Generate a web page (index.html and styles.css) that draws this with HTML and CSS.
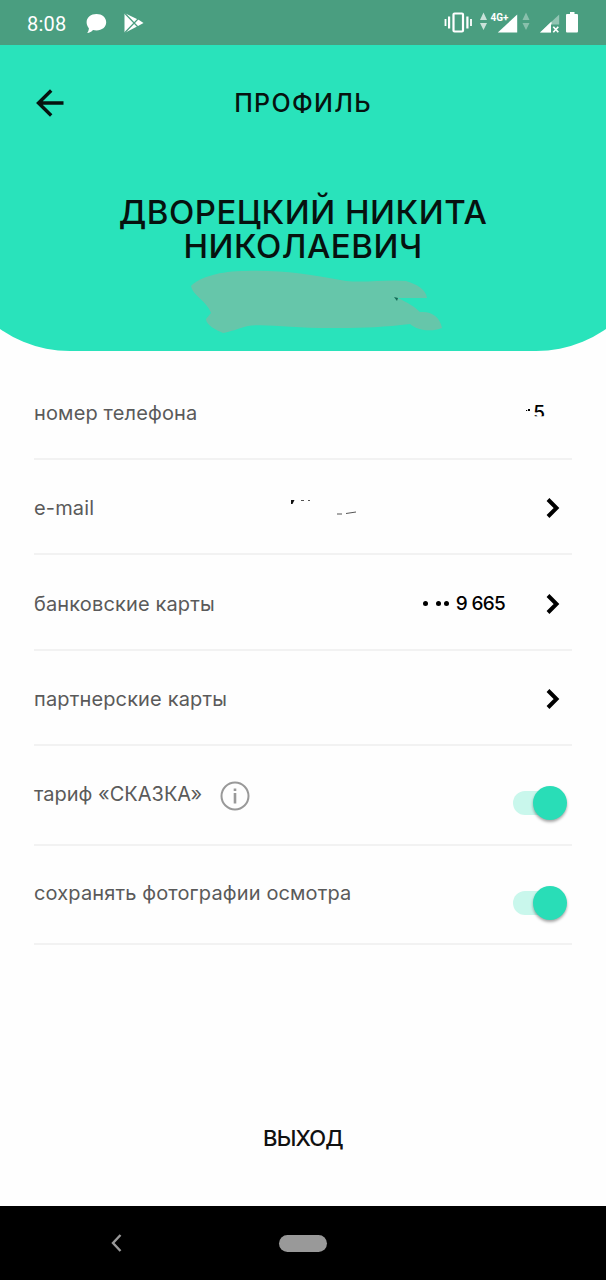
FILE: index.html
```
<!DOCTYPE html>
<html lang="ru">
<head>
  <meta charset="UTF-8" />
  <meta name="viewport" content="width=device-width, initial-scale=1.0" />
  <title>Профиль</title>
  <link rel="stylesheet" href="styles.css">
</head>
<body>

  <div class="status-bar">
    <span class="time">8:08</span>
    <svg class="notifications" width="60" height="24" viewBox="0 0 60 24" fill="#fff">
      <path d="M10.500 2C16 2 20.200 5.500 20.200 10.300S16 18.500 10.500 18.500c-1.300 0-2.500-.2-3.500-.5-1.500 1.700-3.300 2.700-5.800 3 1-1.300 1.500-2.800 1.700-4.800C1.600 14.600.6 12.600.6 10.300.6 5.500 5 2 10.500 2z"/>
      <path d="M38.500 1v20l14.500-7.500 4.500-2.500-4.500-3z"/>
      <path d="M38 .5l14 14.500M38 21.500L52 7" stroke="#4a9e80" stroke-width="1.200"/>
    </svg>
    <svg class="system" width="140" height="26" viewBox="0 0 140 26" fill="#fff">
      <rect x="9.500" y="3.500" width="9.500" height="18" rx="1" fill="none" stroke="#fff" stroke-width="2.200"/>
      <path d="M.6 9h1.800v7H.6zM4 6.500h2.200v12H4zM22.300 6.500h2.200v12h-2.200zM26.100 9h1.800v7h-1.800z"/>
      <path d="M36 10l3.500-7.500L43 10zM36 13h7l-3.500 7z" opacity=".7"/>
      <path d="M53.800 22.500L73.200 4.500v18z"/>
      <path d="M78.500 10L82 2.500 85.500 10zM78.500 13h7L82 20z" opacity=".35"/>
      <path d="M96 22.500l19.200-18v18z" opacity=".4"/>
      <path d="M96 22.500l11.500-11v11z"/>
      <path d="M107 14.500h9v8.500h-9z" fill="#4a9e80"/>
      <path d="M109.300 16.800l5 5.500m0-5.500l-5 5.500" stroke="#fff" stroke-width="1.700"/>
      <path d="M126 2h4.500v2h2.200c.8 0 1.300.5 1.300 1.300v15.900c0 .8-.5 1.300-1.300 1.300h-9.400c-.8 0-1.300-.5-1.300-1.300V5.300c0-.8.5-1.300 1.300-1.300h2.700z"/>
      <text class="network" x="46.500" y="10.500" textLength="18" lengthAdjust="spacingAndGlyphs">4G+</text>
    </svg>
  </div>

  <div class="header">
    <div class="top-row">
      <svg class="back" width="28" height="28" viewBox="0 0 28 28" fill="none" stroke="#06120f" stroke-width="3.400">
        <path d="M27.500 14H2.500M15.200 1.500L2.500 14l12.700 12.500"/>
      </svg>
      <h1>ПРОФИЛЬ</h1>
    </div>
    <h2>ДВОРЕЦКИЙ НИКИТА<br>НИКОЛАЕВИЧ</h2>
    <svg class="smudge" width="256" height="64" viewBox="0 0 256 64">
      <path d="M1 16C10 7 30 1 56 1c36-1 62 3 100 10 20 2 42-2 60 0 10 3 20 8 21 17h-29c10 5 16 8 22 14 12-1 20 5 22 16-10 4-24 3-32-4-25 3-45 4-70 4-42 1-75-5-92-2-8 2-18 6-25 7-7-3-17-8-17-14l5-6C17 31 3 26 1 16z" fill="#66c6aa"/>
      <path d="M204 27l4 1-1 3z" fill="#126a55"/>
    </svg>
  </div>

  <div class="settings">
    <div class="row">
      <span class="label">номер телефона</span>
      <svg class="speck" width="4" height="2" viewBox="0 0 4 2"><path d="M0 1h1.200v1H0zM2 0h2v2H2z"/></svg>
      <span class="value cut">5</span>
    </div>
    <div class="row">
      <span class="label email">e-mail</span>
      <svg class="scraps" width="80" height="18" viewBox="0 0 80 18">
        <path d="M0 1h3.500L1.500 5H0z" fill="#111"/>
        <path d="M10 1.500h3M17 1.500h2M46 15h5M55 14.500l10-1.500" stroke="#555" fill="none"/>
      </svg>
      <svg class="arrow" width="14" height="20" viewBox="0 0 14 20"><path d="M2 1.500l8.500 8.500L2 18.500"/></svg>
    </div>
    <div class="row">
      <span class="label">банковские карты</span>
      <span class="value card"><i></i><i></i><i></i><b>9 665</b></span>
      <svg class="arrow" width="14" height="20" viewBox="0 0 14 20"><path d="M2 1.500l8.500 8.500L2 18.500"/></svg>
    </div>
    <div class="row">
      <span class="label">партнерские карты</span>
      <svg class="arrow" width="14" height="20" viewBox="0 0 14 20"><path d="M2 1.500l8.500 8.500L2 18.500"/></svg>
    </div>
    <div class="row toggle-row">
      <span class="label tariff">тариф «СКАЗКА»</span>
      <svg class="info" width="30" height="30" viewBox="0 0 30 30">
        <circle cx="15" cy="15" r="13.500" fill="none" stroke="#999" stroke-width="2"/>
        <path d="M13.700 7.500h2.600V10h-2.600zM13.700 12h2.600v10.500h-2.600z" fill="#999"/>
      </svg>
      <span class="switch"></span>
    </div>
    <div class="row toggle-row">
      <span class="label">сохранять фотографии осмотра</span>
      <span class="switch"></span>
    </div>
  </div>

  <div class="logout">ВЫХОД</div>

  <div class="nav-bar">
    <svg class="nav-back" width="12" height="18" viewBox="0 0 12 18"><path d="M10.500 1L3 9l7.500 8" fill="none" stroke="#999" stroke-width="2.400"/></svg>
    <span class="home"></span>
  </div>

</body>
</html>
```

FILE: styles.css
```
* {
  box-sizing: border-box;
}

body {
  margin: 0;
  height: 1280px;
  display: flex;
  flex-direction: column;
  overflow: hidden;
  background: #fefefe;
  font-family: Inter, "Open Sans", sans-serif;
  color: #06120f;
}

svg {
  display: block;
  flex: none;
}

.status-bar {
  height: 45px;
  display: flex;
  align-items: center;
  padding: 0 22px 0 27px;
  background: #4a9e80;
}

.time {
  width: 59px;
  font-family: Roboto, sans-serif;
  font-size: 20px;
  line-height: 24px;
  letter-spacing: 0.2px;
  color: #fff;
  margin-top: 3px;
}

.notifications {
  margin-top: 2px;
}

.system {
  margin-left: auto;
}

.network {
  font: bold 11px Roboto, sans-serif;
}

/* the round corners start outside the screen, so its edges cut them */
.header {
  height: 306px;
  background: #29e3bb;
  clip-path: inset(0 -52px round 0 0 122px 122px);
}

.top-row {
  height: 115px;
  display: grid;
  grid-template-columns: 100px 1fr 100px;
  align-items: center;
}

.back {
  margin-left: 36px;
}

h1 {
  margin: 0;
  font-size: 25px;
  font-weight: 550;
  letter-spacing: 1.3px;
  text-align: center;
}

h2 {
  margin: 35px 0 0;
  font-size: 33px;
  line-height: 34px;
  font-weight: 550;
  letter-spacing: 0.5px;
  text-align: center;
  white-space: nowrap;
}

.smudge {
  margin: 7px 0 0 190px;
}

.settings {
  margin: 13.4px 34px 0;
}

.row {
  display: flex;
  align-items: center;
  height: 95.5px;
  padding-top: 3px;
  border-bottom: 2px solid #f2f2f2;
}

.label {
  font-size: 20px;
  line-height: 24px;
  letter-spacing: 0.14px;
  color: #5a5a5a;
  white-space: nowrap;
}

.tariff {
  letter-spacing: 0;
}

.value {
  margin-left: auto;
  font-size: 19px;
  font-weight: 550;
  color: #000;
}

.speck {
  margin: 0 0 5px auto;
}

.cut {
  margin: 0 27px 0 3px;
  clip-path: inset(0 0 8px 0);
}

.email {
  width: 60px;
}

.scraps {
  margin-left: 197px;
}

.card {
  display: flex;
  align-items: center;
}

.card i {
  width: 5px;
  height: 5px;
  margin-right: 3px;
  border-radius: 50%;
  background: #000;
}

.card i:first-child {
  margin-right: 8px;
}

.card b {
  margin-left: 4px;
  font-weight: 550;
  letter-spacing: -0.7px;
}

.arrow {
  margin: 0 12px 0 auto;
  fill: none;
  stroke: #000;
  stroke-width: 4;
}

.value + .arrow {
  margin-left: 41px;
}

.toggle-row {
  height: 99.5px;
  padding-top: 1px;
}

.toggle-row .label {
  margin-bottom: 4px;
}

.info {
  margin-left: 17.5px;
}

.switch {
  position: relative;
  width: 48px;
  height: 24px;
  margin: 15px 11px 0 auto;
  border-radius: 12px;
  background: #c9f7ec;
}

.switch::after {
  content: "";
  position: absolute;
  left: 19.5px;
  top: -5px;
  width: 34px;
  height: 34px;
  border-radius: 50%;
  background: #29ddb7;
  box-shadow: 0 2px 3px rgba(0, 0, 0, 0.35);
}

.logout {
  margin-top: auto;
  height: 136px;
  text-align: center;
  line-height: 136px;
  font-size: 22px;
  font-weight: 550;
  letter-spacing: -0.8px;
  color: #111;
}

.nav-bar {
  height: 74px;
  display: flex;
  align-items: center;
  background: #000;
}

.nav-back {
  margin-left: 110px;
}

.home {
  width: 48px;
  height: 17px;
  margin-left: 157px;
  border-radius: 9px;
  background: #999;
}
```
